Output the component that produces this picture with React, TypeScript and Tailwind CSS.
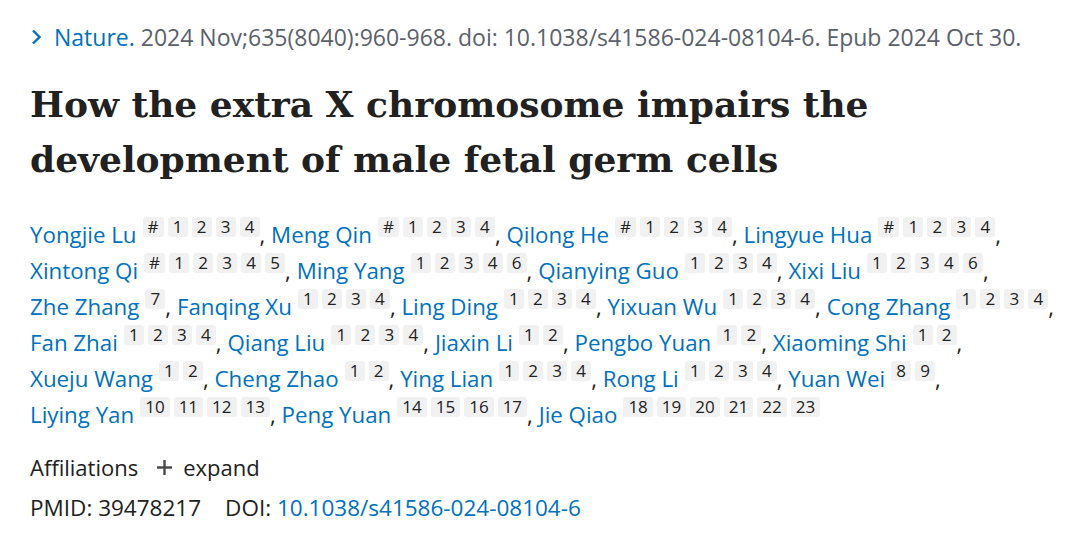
import React from 'react';

// author name + affiliation markers
const authors: [string, string[]][] = [
  ["Yongjie Lu", ["#", "1", "2", "3", "4"]],
  ["Meng Qin", ["#", "1", "2", "3", "4"]],
  ["Qilong He", ["#", "1", "2", "3", "4"]],
  ["Lingyue Hua", ["#", "1", "2", "3", "4"]],
  ["Xintong Qi", ["#", "1", "2", "3", "4", "5"]],
  ["Ming Yang", ["1", "2", "3", "4", "6"]],
  ["Qianying Guo", ["1", "2", "3", "4"]],
  ["Xixi Liu", ["1", "2", "3", "4", "6"]],
  ["Zhe Zhang", ["7"]],
  ["Fanqing Xu", ["1", "2", "3", "4"]],
  ["Ling Ding", ["1", "2", "3", "4"]],
  ["Yixuan Wu", ["1", "2", "3", "4"]],
  ["Cong Zhang", ["1", "2", "3", "4"]],
  ["Fan Zhai", ["1", "2", "3", "4"]],
  ["Qiang Liu", ["1", "2", "3", "4"]],
  ["Jiaxin Li", ["1", "2"]],
  ["Pengbo Yuan", ["1", "2"]],
  ["Xiaoming Shi", ["1", "2"]],
  ["Xueju Wang", ["1", "2"]],
  ["Cheng Zhao", ["1", "2"]],
  ["Ying Lian", ["1", "2", "3", "4"]],
  ["Rong Li", ["1", "2", "3", "4"]],
  ["Yuan Wei", ["8", "9"]],
  ["Liying Yan", ["10", "11", "12", "13"]],
  ["Peng Yuan", ["14", "15", "16", "17"]],
  ["Jie Qiao", ["18", "19", "20", "21", "22", "23"]],
];

const App = () => {
  return (
    <div className="min-h-screen bg-white pl-[30px] pr-[14px] pt-[21px] font-['Open_Sans',sans-serif] text-[#212121]">
      {/* citation line */}
      <div className="flex items-center text-[23px] leading-[32px] text-[#5b616b]">
        <svg width="12" height="18" viewBox="0 0 12 18" className="mr-[12px] shrink-0">
          <path d="M3 2.5 L9.5 9 L3 15.5" fill="none" stroke="#0071bc" strokeWidth="2.4" />
        </svg>
        <span className="text-[#0071bc]">Nature.</span>
        <span>&nbsp;2024 Nov;635(8040):960-968. doi: 10.1038/s41586-024-08104-6. Epub 2024 Oct 30.</span>
      </div>

      {/* title */}
      <h1 className="mt-[24px] font-['DejaVu_Serif',serif] text-[36px] font-bold leading-[55px] text-[#212121]">
        How the extra X chromosome impairs the
        <br />
        development of male fetal germ cells
      </h1>

      {/* authors */}
      <div className="mt-[30px] text-[22.3px] leading-[36px]">
        {authors.map(([name, refs], i) => (
          <React.Fragment key={name}>
            <span className="whitespace-nowrap">
              <span className="text-[#0071bc]">{name}</span>
              <span className="ml-[6px] inline-flex gap-[4px] align-top">
                {refs.map((r) => (
                  <span
                    key={r}
                    className="inline-block h-[20px] min-w-[20px] rounded-[3px] bg-[#f1f1f1] px-[5px] text-center text-[17px] leading-[20px] text-[#212121]"
                  >
                    {r}
                  </span>
                ))}
              </span>
              {i < authors.length - 1 && ","}
            </span>{" "}
          </React.Fragment>
        ))}
      </div>

      {/* affiliations */}
      <div className="mt-[18px] flex items-center text-[22px] leading-[32px]">
        <span>Affiliations</span>
        <svg width="17" height="17" viewBox="0 0 17 17" className="ml-[18px] mr-[10px]">
          <path d="M8.5 1v15M1 8.5h15" stroke="#4a4a4a" strokeWidth="2.4" />
        </svg>
        <span>expand</span>
      </div>

      <div className="mt-[9px] text-[22.5px] leading-[32px]">
        <span>PMID: 39478217</span>
        <span className="ml-[24px]">DOI: </span>
        <span className="text-[#0071bc]">10.1038/s41586-024-08104-6</span>
      </div>
    </div>
  );
};

export default App;
